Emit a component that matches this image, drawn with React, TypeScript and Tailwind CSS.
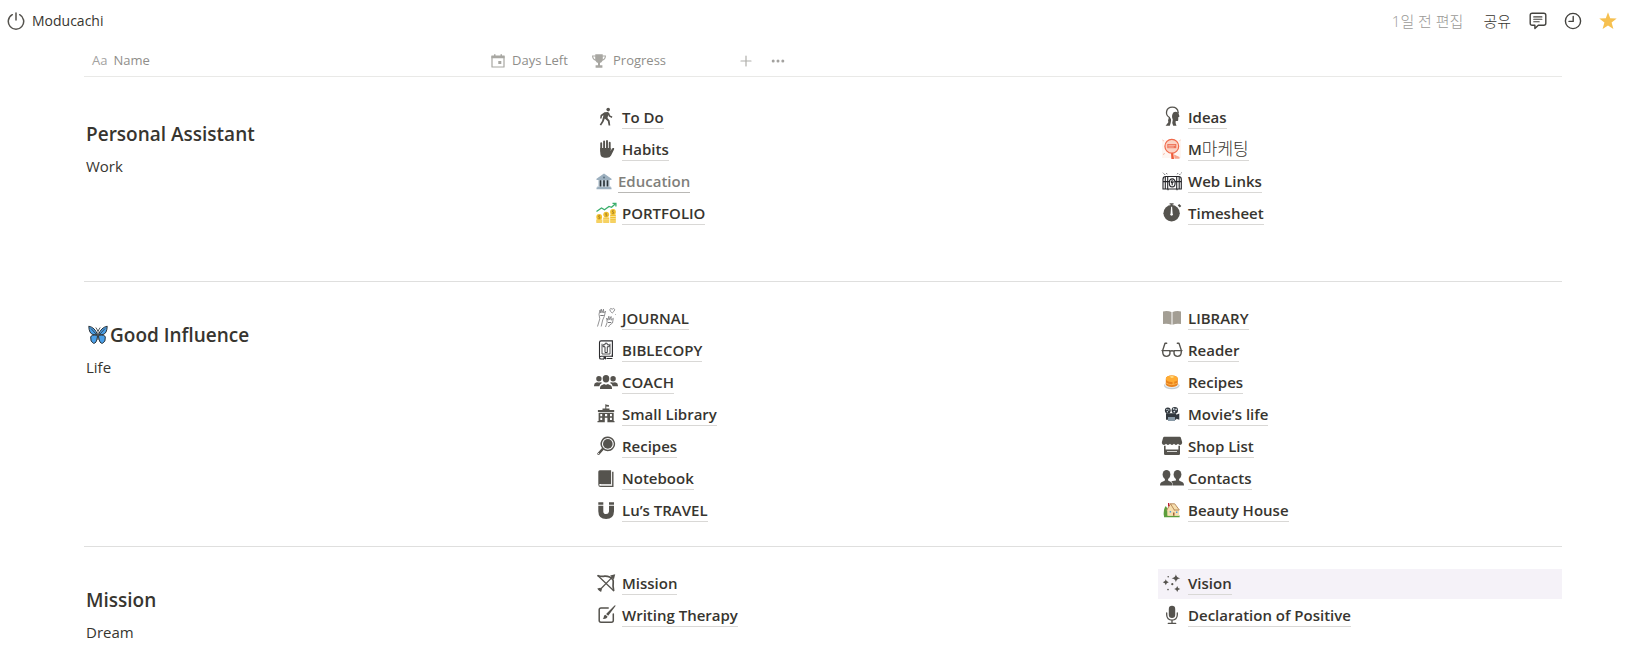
import { ReactNode } from "react";

function Glyph({ children, className = "w-6 h-6" }: { children: ReactNode; className?: string }) {
  return (
    <svg viewBox="0 0 24 24" className={`shrink-0 ${className}`} fill="currentColor" aria-hidden="true">
      {children}
    </svg>
  );
}

const line = {
  fill: "none",
  stroke: "currentColor",
  strokeLinecap: "round",
  strokeLinejoin: "round",
} as const;

const icons = {
  walk: (
    <Glyph>
      <circle cx="14.2" cy="4.6" r="1.8" />
      <path d="M10.5 7.3 13.8 7l1.4.9.9 2.5 2.3 1.2-.6 1.3-2.9-1.4-.7-1.5-.7 3 2.1 2.4.7 5h-1.7l-.8-4.2-3-2.8-1.2 3.4-2.5 3.8-1.4-.8 2.3-3.7 1.5-5.9-1.4.8-.6 2.4H6.1l.5-3.3z" />
    </Glyph>
  ),
  hand: (
    <Glyph>
      <path {...line} strokeWidth="1.9" d="M7.2 14V6.3M10.1 12V4.4M13 12V3.9M15.7 12.5V5.7" />
      <path d="M6.250 11h10.4v3l1.3-2.4q.8-1 1.9-.5.6.4.2 1.3l-3 6q-1.2 2.4-4.2 2.4h-2.300q-4.300-.2-4.300-5z" />
    </Glyph>
  ),
  bank: (
    <Glyph className="w-5 h-6">
      <path fill="#9db0bf" d="M3 9.3 12 3l9 6.3v1.5H3zM4 18.5h16v1.6H4zM3 19.8h18V22H3z" />
      <path fill="#c5d2dc" d="M5 10.8h14v8H5z" />
      <path fill="#2b3439" d="M6.800 11h2v7.500h-2zM11 11h2v7.500h-2zM15.200 11h2v7.500h-2z" />
      <circle cx="12" cy="7.7" r="1.2" fill="#5e7383" />
    </Glyph>
  ),
  portfolio: (
    <Glyph>
      <path d="M2.5 10.5 7.5 7l3 1.8L15 5.5l2.5.8 4-3.6" fill="none" stroke="#3aae6b" strokeWidth="1.3" />
      <path d="M18.5 2.3h3.4v3.3" fill="none" stroke="#3aae6b" strokeWidth="1.3" />
      <g fill="#f2c12e">
        <path d="M2.3 18.500h6v3.200h-6zM9.200 16.500h6v5.200h-6zM16.200 13.500h5.600v8.200h-5.600z" />
        <circle cx="5.2" cy="16" r="2.9" />
        <circle cx="12.2" cy="13.6" r="2.9" />
        <circle cx="19" cy="11" r="2.9" />
      </g>
      <g fill="none" stroke="#a9852a" strokeWidth=".9">
        <path d="M6 14.700H4.700V16h1.100v1.400H4.400M13 12.300h-1.300v1.300h1.100V15h-1.400M19.800 9.700h-1.300V11h1.100v1.400h-1.400" />
      </g>
      <path stroke="#fff3c4" strokeWidth=".7" d="M2.300 20h6M9.200 18.200h6M9.200 20h6M16.200 15.500h5.600M16.200 17.700h5.600M16.200 20h5.600" />
    </Glyph>
  ),
  ideas: (
    <Glyph>
      <path {...line} strokeWidth="1.3" d="M9.5 12.5C4.5 9.5 6 2.2 12.2 2.2c3.6 0 5.7 2.3 6 5.3" />
      <path {...line} strokeWidth="1.2" d="m9.5 12.5-.8 3.3" />
      <path d="M13.300 7.600q2.200-1.600 5 0l1.200 4-1.200.6-.1 3q-.2.9-1.300.9h-1.200q-.6 1.700.8 4.700h-3.300q-1.500-3.500-.4-6-1.800-3.800.5-7.200z" />
      <path d="M9 13.200q2.300-.6 2.100 2-.2 2.600-1.300 5.600H5.600l2.600-3.300z" />
    </Glyph>
  ),
  marketing: (
    <Glyph>
      <path fill="#fbe4db" d="M2 3h19v18H2z" opacity=".35" />
      <circle cx="11.8" cy="9.2" r="6.9" fill="#fbd3c4" stroke="#f0694a" strokeWidth="1.2" />
      <path fill="#ee7257" d="M7.300 7h9v4.200h-9z" />
      <path stroke="#fbd3c4" strokeWidth=".7" d="M8.300 8.400h7M8.300 10h5.500" />
      <path fill="#ee5b3a" d="m11 16.300 2.300-.2.700 5.900h-2.600z" />
      <path fill="#f7a48c" d="m14 17.500 5.500 2.500v1.800h-5z" />
      <path stroke="#f7a48c" strokeWidth=".8" d="m2.500 3 1.300 1M20.500 3l-1 .8M3 17.500l1.800-1" />
    </Glyph>
  ),
  webLinks: (
    <Glyph>
      <g fill="none" stroke="#26262a" strokeWidth="1.1">
        <path d="M3 20V10.200Q3 7.500 6 7.500h12.300q3 0 3 2.700V20z" />
        <path d="M5.300 7.500V20M7.700 7.500V20M16.700 7.500V20M19.200 7.500V20M3 12.600h6.700M14.700 12.600h6.700" />
        <ellipse cx="12.2" cy="13.9" rx="2.9" ry="4" />
        <circle cx="12.2" cy="12.7" r="1" />
        <path d="M12.200 13.700v2.600M8 20v1.200M17 20v1.200" />
        <path strokeWidth=".9" strokeDasharray="1 1" d="m3 3.800 2.500 2.500M21.500 3.800 19 6.300M6.500 4.300 7.700 6M17.900 4.300 16.700 6" />
      </g>
    </Glyph>
  ),
  timer: (
    <Glyph>
      <circle cx="11.6" cy="12.3" r="8.2" />
      <path d="M9.600 2.300h4v1.300h-4zM10.700 3h1.800v2h-1.800zM17.700 4.400l1.500-1.500 2.100 2.100-1.500 1.500z" />
      <path fill="#fff" d="M11.100 5.700h1l.5 6.700a1.400 1.400 0 1 1-2 0z" />
    </Glyph>
  ),
  journal: (
    <Glyph>
      <g fill="none" stroke="#77777a" strokeWidth=".8">
        <path d="m3.500 20.500 2.300-7.700-.8-4.500 1-4.300.8 3 .4-4 1 3.700 1.300-3.500.2 3.800 1.800-1.900-1.200 5.200L8.700 14l-1.500 6.500" />
        <path d="m11.500 21 1.700-4.700-.5-4.300 1.300 2.200.8-4 .8 3.500 1.500-3.200v3.700l2.200-1.900-.8 4.700-3 2.200-1 1.800" />
        <path d="M18.200 7q-2.600-1.900-2.400-3.600.9-1.800 2.400-.2 1.600-1.600 2.500.2.100 1.700-2.500 3.600z" />
      </g>
      <path fill="#77777a" d="M6.300 9h3.500v1H6.300zM14 16h3.300v.9H14zM21 8h.7v.8H21z" />
    </Glyph>
  ),
  bible: (
    <Glyph>
      <g fill="none" stroke="#2b2b2e" strokeWidth="1.1">
        <path d="M5.500 19V4.500q0-1.600 1.600-1.600h11.300v15.300H7.200q-1.700 0-1.700 1.500 0 1.300 1.700 1.300H10M12.500 20.500h5.900" />
        <path d="M8 5.700v10.300h8V5.700" strokeWidth=".8" />
        <path d="M11 14.500V8.700H9V6.800h2l.2-1.600h1.900l.2 1.600h2v1.900h-2v5.800z" strokeWidth=".9" />
      </g>
      <path fill="#2b2b2e" d="M9.500 18.500H12v3.200l-1.300-.9-1.200.9zM17.700 16.500h1.300v2.300h-1.300z" />
    </Glyph>
  ),
  coach: (
    <Glyph>
      <circle cx="4.9" cy="8.7" r="2.7" />
      <circle cx="19.1" cy="8.7" r="2.7" />
      <ellipse cx="12" cy="8.8" rx="3.3" ry="3.7" />
      <path d="M6 18.900q-.2-3.500 2.700-4.200l1.400-.6q1.900 1.200 3.800 0l1.400.6q2.900.7 2.700 4.200zM0 16.300q-.1-3 2.100-3.700l1.300-.4q1.500.8 3 0l1.800.6q-2.600 1-2.900 3.500zM24 16.300q.1-3-2.100-3.700l-1.300-.4q-1.500.8-3 0l-1.800.6q2.600 1 2.900 3.500z" />
    </Glyph>
  ),
  school: (
    <Glyph>
      <path d="M11.300 2.300h1v.4l2.600.2v1.800l-2.600-.2v1.900h3.200v1.700h4.700v2H3.900v-2h4.600V6.400h2.800z" />
      <path fillRule="evenodd" d="M4.600 10.700h15.100v8.200h.8v1.300h-17v-1.300h1.100zM6.300 11.900v2.300h1.900v-2.300zm4.700 0v2.300h2.200v-2.300zm5 0v2.300h1.900v-2.300zM6.300 15.700V18h1.900v-2.300zm9.700 0V18h1.900v-2.300zM10.800 15.700v4.500h2.600v-4.500z" />
    </Glyph>
  ),
  pan: (
    <Glyph>
      <path fillRule="evenodd" d="M13.800 2.600a7.300 7.300 0 1 1-5.400 12.200A7.300 7.300 0 0 1 13.800 2.600zm0 1.400a5.900 5.900 0 1 0 .1 11.800A5.900 5.900 0 0 0 13.800 4z" />
      <circle cx="13.8" cy="9.9" r="4.8" />
      <path d="m8.200 13.800 1.700 1.700-4.600 5.200q-.9.800-1.800-.1-.7-.9.100-1.700z" />
      <circle cx="4.6" cy="19.6" r=".6" fill="#fff" />
    </Glyph>
  ),
  notebook: (
    <Glyph>
      <path d="M5.800 4.200h11.300v13.700H6.300q-1.200 0-1.200.9t1.200.9h11.800V5.800h1.400V21H6.600q-2.300 0-2.300-2.200V5.700q0-1.500 1.500-1.500z" />
      <path d="M7 18.600h10.500v.5H7z" opacity=".5" />
    </Glyph>
  ),
  magnet: (
    <Glyph>
      <path d="M4.300 4.200h5v2.600h-5zM15 4.200h5v2.600h-5zM4.300 7.700h5v5.700q.2 2.600 2.800 2.600t2.900-2.600V7.700h5v5.500q-.2 7.800-7.900 7.800t-7.800-7.800z" />
    </Glyph>
  ),
  openBook: (
    <Glyph>
      <path fill="#a39e94" d="M3 5.500q4.600-1 8.500.6v12.700q-4-1.500-8.500-.7zM21 5.500q-4.600-1-8.500.6v12.700q4-1.500 8.500-.7z" />
    </Glyph>
  ),
  glasses: (
    <Glyph>
      <g {...line} strokeWidth="1.4">
        <path d="M2 12.600h7.800l.2 2.700q-.3 3.100-3.600 3.100-3 0-3.500-3l-.3-2.800L5 5.300h1.700M22 12.600h-7.800l-.2 2.700q.3 3.100 3.600 3.100 3 0 3.500-3l.3-2.800L19 5.300h-1.700M9.800 13.300q2.200-1.200 4.400 0" />
      </g>
    </Glyph>
  ),
  pancakes: (
    <Glyph>
      <ellipse cx="11.8" cy="15.6" rx="7.8" ry="3.6" fill="#c3ccd3" />
      <ellipse cx="11.8" cy="14.9" rx="6.9" ry="2.9" fill="#eef1f3" />
      <path fill="#e8821c" d="M5.800 9q0-3.500 6-3.500t6 3.500v5.300q-1 2.700-6 2.700t-6-2.700z" />
      <path fill="#ffac33" d="M5.800 9q0-3.500 6-3.500t6 3.500q-1 3-3.500 2.500v2.500l-1.800.2v-2.300q-5.700.4-6.700-2.900z" />
      <path stroke="#ffc46b" strokeWidth=".7" fill="none" d="M6 13q5.500 3.300 11.600 0" />
      <path fill="#ffe08a" d="m9.500 6.800 2.600-.8 2.300.9-2.500 1.200z" />
    </Glyph>
  ),
  movie: (
    <Glyph>
      <path fill="#31373d" d="M6 11.300h10.200v6.500H6zM15.500 13l3.800-1.500v6.200l-3.800-1.300z" />
      <circle cx="7.8" cy="8.5" r="2.9" fill="#31373d" />
      <circle cx="14.8" cy="8.2" r="3.2" fill="#31373d" />
      <g fill="#d5dde3">
        <circle cx="6.9" cy="7.5" r=".7" />
        <circle cx="8.8" cy="8" r=".7" />
        <circle cx="7.4" cy="9.7" r=".7" />
        <circle cx="13.7" cy="6.9" r=".9" />
        <circle cx="16.1" cy="7.4" r=".9" />
        <circle cx="14.3" cy="9.6" r=".9" />
      </g>
      <path fill="#8899a6" d="M8 15h7v4H8z" />
    </Glyph>
  ),
  shop: (
    <Glyph>
      <path d="M4.300 2.800h15.400q.9 0 1.200.9l1.200 4.200v1.300q-.5 1.700-2.100 1.700-1.300 0-2-1.100-.7 1.100-2 1.100t-2-1.100q-.7 1.100-2 1.100t-2-1.100q-.7 1.100-2 1.100T6 9.800q-.7 1.100-2 1.100-1.600 0-2.100-1.700V7.900l1.200-4.200q.3-.9 1.200-.9z" />
      <path fillRule="evenodd" d="M4 11.800h1.600v3.700h12.800v-3.700H20v8q0 1.300-1.300 1.300H5.300Q4 21.100 4 19.800zm3 5.100v.9h10v-.9z" />
    </Glyph>
  ),
  contacts: (
    <Glyph>
      <ellipse cx="6.5" cy="8.6" rx="3.9" ry="4.7" />
      <ellipse cx="17.5" cy="8.6" rx="3.9" ry="4.7" />
      <path d="M0 19.600q-.1-3.600 3-4.200l1.900-.8v-2h3.200v2l1.900.8q2.500.7 2.500 4.200zM12.900 19.600q.1-2.900-1.600-4.300l4.600-.7v-2h3.200v2l1.900.8q3.100.6 3 4.200z" />
    </Glyph>
  ),
  house: (
    <Glyph>
      <path fill="#5c9e3c" d="M3.800 17.500q-.7-6 2-9.500 2.400 2.500 2.300 9.500zM4 17.500h15.600v1.800H4z" />
      <path fill="#f6dfae" d="m7.300 11.500 3-5.500h4.200l4.600 6v5.700H7.300z" />
      <path {...line} stroke="#b98a5a" strokeWidth="1" d="m6.800 12 3.700-6.200 3.800 6.200M10.500 5.800h4.200l4.600 6.200h-5" />
      <path fill="#be1931" d="M8 5h1.300v2.200L8 8.900z" />
      <path fill="#4f9bd9" d="M9.700 13h1.400v1.500H9.700zM16 13.500h1.400V15H16z" />
      <path fill="#a0603a" d="M13 14.500h1.500v3.200H13z" />
    </Glyph>
  ),
  bow: (
    <Glyph>
      <g {...line} strokeWidth="1.2">
        <path d="M6.700 18 19 5.300M4 4.700l15.700 15" />
        <path strokeWidth="1.7" d="M4.200 4.700q3.500 1.100 6.500.4 5.300-.2 8 3.300.8 1.200.5 3.500-.5 3.500.4 7.400" />
      </g>
      <path d="m21.200 3.200-1.300 5.200-3.800-3.800zM3.300 17.500l3-.8 1.600 1.500-.8 2.900-1.600-1-1.200-1.200z" />
    </Glyph>
  ),
  writing: (
    <Glyph>
      <path {...line} strokeWidth="1.5" d="M14.200 5H7Q5.200 5 5.200 6.800v10.700q0 1.700 1.800 1.700h10.500q1.800 0 1.800-1.700V11" />
      <path d="m21.400 2.300.1.800-7.300 9.600-2.100-1.800 8.400-8.500zM11.300 11.700l2.200 1.900q-.2 2.500-4.800 2.300 1-.7 1-2 .2-1.700 1.600-2.200z" />
    </Glyph>
  ),
  sparkles: (
    <Glyph>
      <path d="M15.900 3.300q.5 3.300 4.300 4-3.800.7-4.300 4-.5-3.300-4.300-4 3.800-.7 4.300-4zM5.800 8.200q.4 2.600 3 3-2.600.4-3 3-.4-2.600-3-3 2.600-.4 3-3zM17.200 15q.4 2.600 3 3-2.600.4-3 3-.4-2.600-3-3 2.600-.4 3-3z" />
      <circle cx="8.2" cy="5.8" r=".8" />
      <circle cx="12.3" cy="13.2" r="1.1" />
      <circle cx="8" cy="18.6" r=".8" />
    </Glyph>
  ),
  mic: (
    <Glyph>
      <rect x="8.8" y="2.7" width="6.4" height="12.3" rx="3.2" />
      <path {...line} strokeWidth="1.3" d="M6.700 10v2q.3 4.900 5.300 5.100 5-.2 5.300-5.100v-2M12 17.100v3M8.300 20.400h7.400" />
    </Glyph>
  ),
};

type IconName = keyof typeof icons;

type PageItem = {
  label: string;
  // Hangul tail of the label, set in a lighter weight
  korean?: string;
  icon: IconName;
  muted?: boolean;
  highlighted?: boolean;
};

const sections: { title: string; note: string; butterfly?: boolean; spacer?: boolean; columns: PageItem[][] }[] = [
  {
    title: "Personal Assistant",
    note: "Work",
    spacer: true,
    columns: [
      [
        { label: "To Do", icon: "walk" },
        { label: "Habits", icon: "hand" },
        { label: "Education", icon: "bank", muted: true },
        { label: "PORTFOLIO", icon: "portfolio" },
      ],
      [
        { label: "Ideas", icon: "ideas" },
        { label: "M", korean: "마케팅", icon: "marketing" },
        { label: "Web Links", icon: "webLinks" },
        { label: "Timesheet", icon: "timer" },
      ],
    ],
  },
  {
    title: "Good Influence",
    note: "Life",
    butterfly: true,
    columns: [
      [
        { label: "JOURNAL", icon: "journal" },
        { label: "BIBLECOPY", icon: "bible" },
        { label: "COACH", icon: "coach" },
        { label: "Small Library", icon: "school" },
        { label: "Recipes", icon: "pan" },
        { label: "Notebook", icon: "notebook" },
        { label: "Lu’s TRAVEL", icon: "magnet" },
      ],
      [
        { label: "LIBRARY", icon: "openBook" },
        { label: "Reader", icon: "glasses" },
        { label: "Recipes", icon: "pancakes" },
        { label: "Movie’s life", icon: "movie" },
        { label: "Shop List", icon: "shop" },
        { label: "Contacts", icon: "contacts" },
        { label: "Beauty House", icon: "house" },
      ],
    ],
  },
  {
    title: "Mission",
    note: "Dream",
    columns: [
      [
        { label: "Mission", icon: "bow" },
        { label: "Writing Therapy", icon: "writing" },
      ],
      [
        { label: "Vision", icon: "sparkles", highlighted: true },
        { label: "Declaration of Positive", icon: "mic" },
      ],
    ],
  },
];

function Butterfly() {
  return (
    <svg viewBox="0 0 20 20" className="w-5 h-5 mx-0.5 shrink-0" aria-hidden="true">
      <g fill="#4a9fe8" stroke="#2b3338" strokeWidth="1" strokeLinejoin="round">
        <path d="M9.400 9.500Q7 2.500.8 1.200q.2 7.300 4.200 8.300 2 .6 4.400 0zM10.600 9.500Q13 2.500 19.200 1.200q-.2 7.300-4.200 8.300-2 .6-4.400 0z" />
        <path d="M9.400 10.300q-6-.9-6.700 1.700-.6 5 2.800 6.300 2.900.6 3.900-6.300zM10.600 10.300q6-.9 6.700 1.700.6 5-2.800 6.300-2.900.6-3.900-6.300z" />
      </g>
      <path d="M10 5v10M10 6 7.800 2.500M10 6l2.200-3.500M3 3.500l5 5.500M17 3.500 12 9" fill="none" stroke="#2b3338" strokeWidth=".8" />
    </svg>
  );
}

function PageLink({ item }: { item: PageItem }) {
  return (
    <li className={`flex items-center h-[30px] pl-0.5 pb-0.5 ${item.highlighted ? "bg-[#f5f2f8]" : ""}`}>
      <a href="#" className={`flex items-center gap-1 ${item.muted ? "text-[#807f7b]" : "text-[#37352f]"}`}>
        <span className={item.muted ? "" : "text-[#55534e]"}>{icons[item.icon]}</span>
        <span
          className={`border-b text-[15px] leading-[22px] font-semibold whitespace-nowrap ${
            item.muted ? "border-[#b9b8b5]" : "border-[#d9d8d6]"
          }`}
        >
          {item.label}
          {item.korean && <span className="text-[17px] leading-[22px] font-light">{item.korean}</span>}
        </span>
      </a>
    </li>
  );
}

function TopBar() {
  return (
    <header className="flex items-center justify-between h-[42px] pl-[7px] pr-3.5 text-[15px]">
      <a href="#" className="flex items-center gap-[7px] text-sm">
        <svg viewBox="0 0 18 18" className="w-[18px] h-[18px] text-[#55534e]" {...line} strokeWidth="1.5">
          <path d="M9 1v7M5.300 2.700a7.700 7.700 0 1 0 7.400 0" />
        </svg>
        Moducachi
      </a>
      <div className="flex items-center">
        <span className="text-[#9b9a97] font-light mr-5">1일 전 편집</span>
        <button type="button" className="font-light mr-[18px]">공유</button>
        <div className="flex items-center gap-[17px] text-[#44433f]">
          <button type="button" aria-label="댓글">
            <svg viewBox="0 0 18 18" className="w-[18px] h-[18px]" {...line} strokeWidth="1.4">
              <path d="M3.200 1.200h11.600q2 0 2 2v8q0 2-2 2H9.300l-3.400 3.300v-3.300H3.200q-2 0-2-2v-8q0-2 2-2z" />
              <path strokeWidth="1.1" d="M4.700 4.900h8.200M4.700 7.300h8.200M4.700 9.700h5.500" />
            </svg>
          </button>
          <button type="button" aria-label="업데이트">
            <svg viewBox="0 0 18 18" className="w-[18px] h-[18px]" {...line} strokeWidth="1.4">
              <circle cx="9" cy="9" r="7.6" />
              <path d="M9.200 4.500v4.900H5" />
            </svg>
          </button>
          <button type="button" aria-label="즐겨찾기">
            <svg viewBox="0 0 18 18" className="w-[18px] h-[18px]" fill="#f6c050">
              <path d="m9 .3 2.200 6 6.500.3-5.100 4 1.800 6.400L9 13.400 3.600 17l1.800-6.400-5.100-4 6.500-.3z" />
            </svg>
          </button>
        </div>
      </div>
    </header>
  );
}

function PropertyBar() {
  return (
    <div className="flex items-center h-[35px] pt-[3px] border-b border-[#e9e9e7] text-[13px] text-[#8f8e8a]">
      <button type="button" className="flex items-center gap-1.5 w-[399px] pl-2">
        <span className="text-[#a3a29f]">Aa</span>
        Name
      </button>
      <button type="button" className="flex items-center gap-[7px] w-[101px] pl-2">
        <svg viewBox="0 0 14 14" className="w-3.5 h-3.5 shrink-0 text-[#a8a7a2]">
          <path {...line} strokeWidth="1.2" d="M1 2.500h12V13H1z" />
          <path fill="currentColor" d="M.4 1.500h13.200v2.700H.4zM3 .2h1.500v2H3zM9.500.2H11v2H9.500zM7.300 7h3v3h-3z" />
        </svg>
        Days Left
      </button>
      <button type="button" className="flex items-center gap-[7px] w-[146px] pl-2">
        <svg viewBox="0 0 14 14" className="w-3.5 h-3.5 shrink-0 text-[#a8a7a2]" fill="currentColor">
          <path d="M3.300.2h7.400v1.200H14q-.1 4.200-3.500 5.300-.8 1.700-2.500 2.300v2.300h2.400v2.500H3.600v-2.500H6V9q-1.700-.6-2.500-2.300Q.1 5.600 0 1.400h3.300zM1.100 2.500Q1.400 4.600 3.200 5.400V2.500zm9.700 0v2.900q1.800-.8 2.100-2.900z" />
        </svg>
        Progress
      </button>
      <button type="button" aria-label="Add property" className="flex justify-center w-8">
        <svg viewBox="0 0 12 12" className="w-3 h-3 text-[#b0afab]" {...line} strokeWidth="1.2">
          <path d="M6 1v10M1 6h10" />
        </svg>
      </button>
      <button type="button" aria-label="More" className="flex justify-center w-8">
        <svg viewBox="0 0 14 4" className="w-3.5 h-1 text-[#a3a29f]" fill="currentColor">
          <circle cx="2.2" cy="2" r="1.5" />
          <circle cx="7" cy="2" r="1.5" />
          <circle cx="11.8" cy="2" r="1.5" />
        </svg>
      </button>
    </div>
  );
}

export default function App() {
  return (
    <div className="min-h-screen bg-white text-[#37352f] font-['Open_Sans','Noto_Sans_CJK_KR',sans-serif]">
      <TopBar />
      <main className="pl-[84px] pr-[69px]">
        <PropertyBar />
        {sections.map((section, i) => (
          <section
            key={section.title}
            className={`grid grid-cols-[462fr_520fr_404fr] gap-x-[46px] pb-5 ${
              i === 0 ? "pt-[26px]" : "pt-[22px] border-t border-[#dfdfde]"
            }`}
          >
            <div className="pl-0.5 pt-[15px]">
              <h2 className="flex items-center h-8 text-[19px] leading-8 font-semibold">
                {section.butterfly && <Butterfly />}
                {section.title}
              </h2>
              <p className="text-[15px] leading-8">{section.note}</p>
            </div>
            {section.columns.map((items, c) => (
              <ul key={c} className={`flex flex-col gap-0.5 ${section.spacer ? "pb-8" : ""}`}>
                {items.map((item) => (
                  <PageLink key={item.label} item={item} />
                ))}
              </ul>
            ))}
          </section>
        ))}
      </main>
    </div>
  );
}
